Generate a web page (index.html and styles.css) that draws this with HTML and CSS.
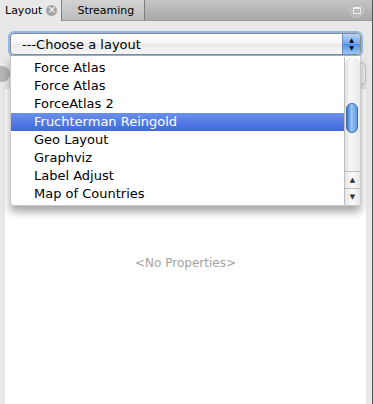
FILE: index.html
```html
<!DOCTYPE html>
<html lang="en">
<head>
    <meta charset="UTF-8">
    <title>Layout</title>
    <link rel="stylesheet" href="styles.css">
</head>
<body>

<div class="window">
    <!-- Tabs at the top -->
    <div class="tabbar">
        <div class="tab active">Layout <span class="close">&#215;</span></div>
        <div class="tab">Streaming</div>
        <div class="spacer"></div>
        <span class="minimize"><span></span></span>
    </div>

    <div class="panel">
        <div class="combo">
            <span class="combo-text">---Choose a layout</span>
            <span class="combo-arrows">&#9650;<br>&#9660;</span>
        </div>

        <!-- Toolbar, mostly hidden by the open list -->
        <div class="toolbar">
            <span class="dot"></span>
            <span class="run">Run</span>
        </div>

        <div class="props">
            <span class="empty">&lt;No Properties&gt;</span>
        </div>

        <!-- Open drop-down list -->
        <div class="popup">
            <ul class="items">
                <li>Force Atlas</li>
                <li>Force Atlas</li>
                <li>ForceAtlas 2</li>
                <li class="selected">Fruchterman Reingold</li>
                <li>Geo Layout</li>
                <li>Graphviz</li>
                <li>Label Adjust</li>
                <li>Map of Countries</li>
            </ul>
            <div class="scrollbar">
                <div class="track">
                    <div class="thumb"></div>
                </div>
                <div class="arrow">&#9650;</div>
                <div class="arrow">&#9660;</div>
            </div>
        </div>
    </div>
</div>

</body>
</html>
```

FILE: styles.css
```css
html, body {
    margin: 0;
    height: 100%;
}
body {
    font-family: 'Lucida Grande', 'DejaVu Sans', sans-serif;
    background-color: #e8e8e8;
    color: #000;
}
.window {
    height: 100%;
    display: flex;
    flex-direction: column;
    border-right: 1px solid #555;
    box-sizing: border-box;
}
/* Tab bar */
.tabbar {
    display: flex;
    height: 20px;
    background: linear-gradient(#c4c4c4, #a9a9a9);
    border-bottom: 1px solid #9a9a9a;
    font-size: 11px;
}
.tab {
    display: flex;
    align-items: center;
    padding: 0 15px;
    width: 52px;
    border-right: 1px solid #7f7f7f;
    background: linear-gradient(#d2d2d2, #bcbcbc);
}
.tab.active {
    width: auto;
    padding: 0 4px 0 5px;
    background: #e8e8e8;
    gap: 4px;
    height: 21px;
}
.close {
    display: inline-block;
    width: 11px;
    height: 11px;
    border-radius: 50%;
    background: #a5a5a5;
    color: #eee;
    font-size: 10px;
    line-height: 10px;
    text-align: center;
    font-weight: bold;
}
.spacer {
    flex: 1;
}
.minimize {
    width: 13px;
    height: 13px;
    margin: 3px 8px 0 0;
    border-radius: 50%;
    background: #b9b9b9;
    border: 1px solid #c9c9c9;
    display: flex;
    align-items: center;
    justify-content: center;
}
.minimize span {
    width: 6px;
    height: 4px;
    border: 1px solid #eee;
    border-top-width: 2px;
}
/* Panel body */
.panel {
    position: relative;
    flex: 1;
    display: flex;
    flex-direction: column;
}
.combo {
    margin: 12px 11px 0 10px;
    height: 20px;
    display: flex;
    align-items: center;
    background: linear-gradient(#ffffff, #f3f3f3 50%, #e9e9e9 51%, #f7f7f7);
    border: 1px solid #8a8a8a;
    border-radius: 4px;
    box-shadow: 0 0 0 2px #8fb6e4;
    font-size: 13px;
}
.combo-text {
    flex: 1;
    padding-left: 11px;
}
.combo-arrows {
    width: 18px;
    height: 20px;
    background: linear-gradient(#bcd6f6, #6ea3ea 50%, #4e8de6 51%, #9fc8f8);
    border-left: 1px solid #6a8cc0;
    border-radius: 0 3px 3px 0;
    font-size: 6px;
    line-height: 8px;
    text-align: center;
    padding-top: 2px;
    box-sizing: border-box;
}
.toolbar {
    height: 30px;
    margin-top: 4px;
    display: flex;
    align-items: center;
    justify-content: space-between;
    padding: 0 6px 0 7px;
}
.dot {
    width: 10px;
    height: 16px;
    border-radius: 0 8px 8px 0;
    background: #b5b5b5;
    margin-left: -7px;
}
.run {
    width: 60px;
    height: 22px;
    border: 1px solid #c4c4c4;
    border-radius: 4px;
    background: #f2f2f2;
    font-size: 12px;
    line-height: 22px;
    padding-left: 28px;
    box-sizing: border-box;
    color: #666;
}
.props {
    flex: 1;
    margin: 0 6px 0 5px;
    background: #fff;
    display: flex;
    justify-content: center;
    padding-top: 167px;
}
.empty {
    font-size: 12px;
    color: #a3a3a3;
}
/* Drop-down list */
.popup {
    position: absolute;
    top: 35px;
    left: 10px;
    width: 351px;
    height: 150px;
    background: #fff;
    border: 1px solid #c9c9c9;
    border-top: none;
    border-radius: 0 0 4px 4px;
    box-shadow: 0 6px 8px rgba(0, 0, 0, 0.35);
    display: flex;
    box-sizing: border-box;
}
.items {
    list-style: none;
    margin: 0;
    padding: 3px 0 0 0;
    flex: 1;
    font-size: 13px;
}
.items li {
    height: 18px;
    line-height: 18px;
    padding-left: 23px;
}
.items li.selected {
    background: linear-gradient(#6a90ea, #3e69de);
    color: #fff;
}
.scrollbar {
    width: 15px;
    display: flex;
    flex-direction: column;
    border-left: 1px solid #bdbdbd;
    margin-top: 1px;
}
.track {
    flex: 1;
    position: relative;
    background: linear-gradient(90deg, #e0e0e0, #f8f8f8 40%, #e8e8e8);
    border-radius: 7px 7px 0 0;
}
.thumb {
    position: absolute;
    top: 46px;
    left: 1px;
    width: 12px;
    height: 30px;
    border-radius: 6px;
    background: linear-gradient(90deg, #3a76c8, #9cc6f4 45%, #5d9be0);
    border: 1px solid #3f6aa8;
    box-sizing: border-box;
}
.arrow {
    height: 16px;
    font-size: 7px;
    line-height: 16px;
    text-align: center;
    color: #333;
    background: linear-gradient(90deg, #e6e6e6, #fbfbfb, #e6e6e6);
    border-top: 1px solid #bdbdbd;
}
```
